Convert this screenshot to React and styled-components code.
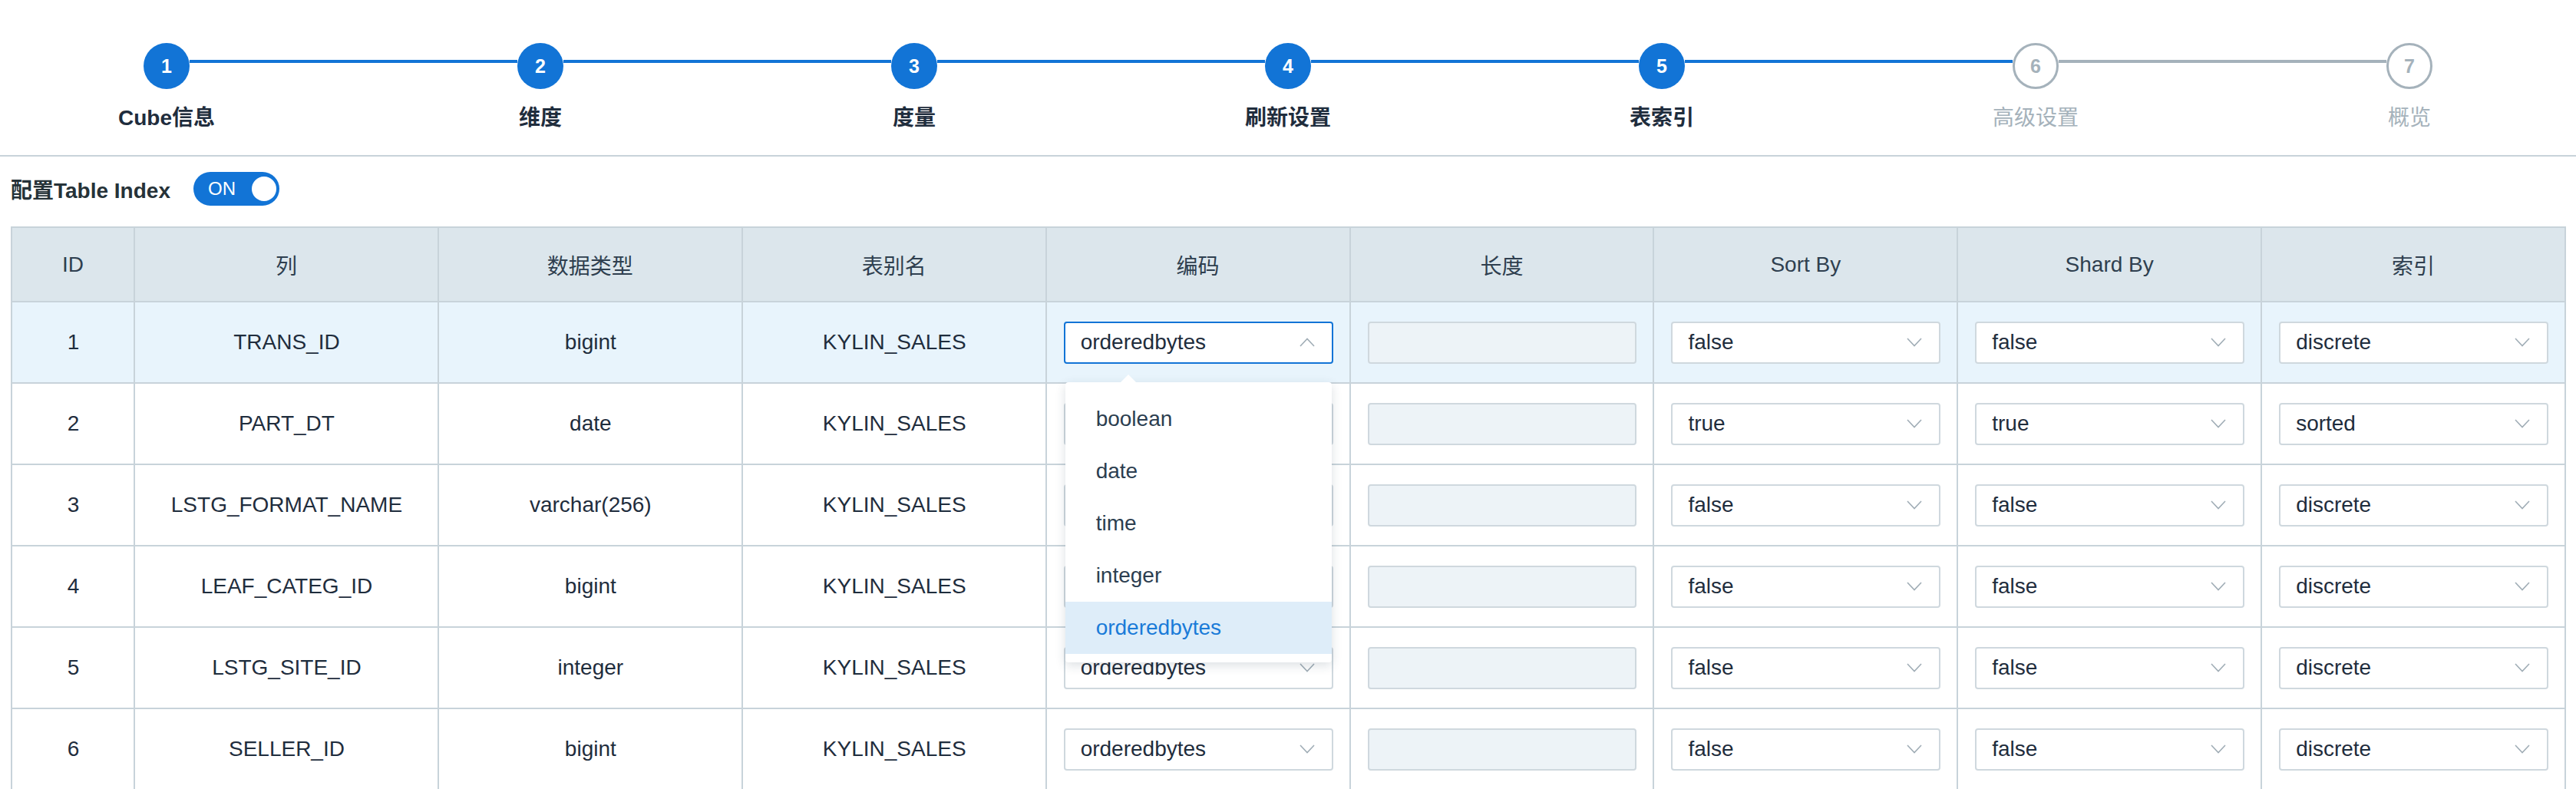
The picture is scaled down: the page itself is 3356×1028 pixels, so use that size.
import React from "react";
import styled, { createGlobalStyle, css } from "styled-components";

const GlobalStyle = createGlobalStyle`
  html, body {
    margin: 0;
    padding: 0;
    background: #fff;
  }
  body {
    font-family: "Liberation Sans", "Noto Sans CJK SC", sans-serif;
    color: #1f2d3d;
  }
  * {
    box-sizing: border-box;
  }
`;

const blue = "#1274d6";
const grey = "#a5b2bb";
const line = "#c8d3da";

const steps = ["Cube信息", "维度", "度量", "刷新设置", "表索引", "高级设置", "概览"];
const current = 5;

const rows = [
  { id: 1, col: "TRANS_ID", type: "bigint", enc: "orderedbytes", sort: "false", shard: "false", index: "discrete", open: true },
  { id: 2, col: "PART_DT", type: "date", enc: "date", sort: "true", shard: "true", index: "sorted" },
  { id: 3, col: "LSTG_FORMAT_NAME", type: "varchar(256)", enc: "dict", sort: "false", shard: "false", index: "discrete" },
  { id: 4, col: "LEAF_CATEG_ID", type: "bigint", enc: "orderedbytes", sort: "false", shard: "false", index: "discrete" },
  { id: 5, col: "LSTG_SITE_ID", type: "integer", enc: "orderedbytes", sort: "false", shard: "false", index: "discrete" },
  { id: 6, col: "SELLER_ID", type: "bigint", enc: "orderedbytes", sort: "false", shard: "false", index: "discrete" },
];

const encodings = ["boolean", "date", "time", "integer", "orderedbytes"];

const Steps = styled.div`
  display: flex;
  align-items: flex-start;
  height: 204px;
  padding: 56px 187px 0;
  border-bottom: 2px solid ${line};
`;

const Step = styled.div`
  flex: none;
  width: 60px;
  display: flex;
  flex-direction: column;
  align-items: center;
`;

const Circle = styled.div`
  width: 60px;
  height: 60px;
  border-radius: 50%;
  display: flex;
  align-items: center;
  justify-content: center;
  font-size: 25px;
  font-weight: 700;
  ${({ done }) =>
    done
      ? css`
          background: ${blue};
          color: #fff;
        `
      : css`
          background: #fff;
          color: ${grey};
          border: 3px solid ${grey};
        `}
`;

const StepLabel = styled.div`
  margin-top: 18px;
  white-space: nowrap;
  font-size: 28px;
  line-height: 40px;
  font-weight: ${({ done }) => (done ? 700 : 400)};
  color: ${({ done }) => (done ? "#1f2d3d" : grey)};
`;

const Connector = styled.div`
  flex: 1;
  height: 4px;
  margin-top: 22px;
  background: ${({ done }) => (done ? blue : grey)};
`;

const Toolbar = styled.div`
  display: flex;
  align-items: center;
  gap: 30px;
  padding: 20px 14px 0;
`;

const ToolbarLabel = styled.span`
  font-size: 28px;
  font-weight: 700;
  color: #263238;
`;

const Switch = styled.div`
  width: 112px;
  height: 44px;
  border-radius: 22px;
  background: ${blue};
  display: flex;
  align-items: center;
  justify-content: space-between;
  padding: 0 4px 0 19px;
  color: #fff;
  font-size: 24px;
`;

const Knob = styled.span`
  width: 32px;
  height: 32px;
  border-radius: 50%;
  background: #fff;
`;

const TableWrap = styled.div`
  padding: 27px 13px 0 14px;
`;

const Table = styled.table`
  width: 100%;
  table-layout: fixed;
  border-collapse: collapse;
  font-size: 28px;
`;

const Th = styled.th`
  height: 97px;
  border: 2px solid ${line};
  background: #dce6ec;
  color: #2f3f4f;
  font-weight: 400;
  text-align: center;
`;

const Tr = styled.tr`
  background: ${({ active }) => (active ? "#e8f4fc" : "#fff")};
`;

const Td = styled.td`
  height: 106px;
  border: 2px solid ${line};
  text-align: center;
  padding: 0 21px 0 22px;
  color: #1f2d3d;
`;

const SelectBox = styled.div`
  position: relative;
  height: 55px;
  display: flex;
  align-items: center;
  justify-content: space-between;
  padding: 0 22px 0 20px;
  background: #fff;
  border: 2px solid ${({ open }) => (open ? blue : "#cfd8de")};
  border-radius: 4px;
  text-align: left;
  font-size: 28px;
  color: #1f2d3d;
`;

const LengthInput = styled.div`
  height: 55px;
  background: #edf3f7;
  border: 2px solid #cfd8de;
  border-radius: 4px;
`;

const Menu = styled.ul`
  position: absolute;
  z-index: 5;
  left: 0;
  right: 0;
  top: calc(100% + 26px);
  margin: 0;
  padding: 14px 0 11px;
  list-style: none;
  background: #fff;
  border-radius: 4px;
  box-shadow: 0 4px 14px rgba(40, 60, 80, 0.16);

  &::before {
    content: "";
    position: absolute;
    top: -10px;
    left: 72px;
    border-left: 10px solid transparent;
    border-right: 10px solid transparent;
    border-bottom: 10px solid #fff;
  }
`;

const MenuItem = styled.li`
  height: 68px;
  display: flex;
  align-items: center;
  padding-left: 40px;
  font-size: 28px;
  color: ${({ selected }) => (selected ? "#1a7bd8" : "#2c3e50")};
  background: ${({ selected }) => (selected ? "#deedf9" : "transparent")};
`;

function Chevron({ up }) {
  return (
    <svg width="20" height="12" viewBox="0 0 20 12" fill="none">
      <polyline
        points={up ? "1,11 10,1.5 19,11" : "1,1 10,10.5 19,1"}
        stroke="#a0adb6"
        strokeWidth="1.6"
      />
    </svg>
  );
}

function Select({ value, open, children }) {
  return (
    <SelectBox open={open}>
      <span>{value}</span>
      <Chevron up={open} />
      {children}
    </SelectBox>
  );
}

export default function App() {
  return (
    <>
      <GlobalStyle />
      <Steps>
        {steps.map((s, i) => (
          <React.Fragment key={s}>
            {i > 0 && <Connector done={i < current + 1} />}
            <Step>
              <Circle done={i < current}>{i + 1}</Circle>
              <StepLabel done={i < current}>{s}</StepLabel>
            </Step>
          </React.Fragment>
        ))}
      </Steps>
      <Toolbar>
        <ToolbarLabel>配置Table Index</ToolbarLabel>
        <Switch>
          ON
          <Knob />
        </Switch>
      </Toolbar>
      <TableWrap>
        <Table>
          <colgroup>
            <col style={{ width: 160 }} />
            <col />
            <col />
            <col />
            <col />
            <col />
            <col />
            <col />
            <col />
          </colgroup>
          <thead>
            <tr>
              {["ID", "列", "数据类型", "表别名", "编码", "长度", "Sort By", "Shard By", "索引"].map((h) => (
                <Th key={h}>{h}</Th>
              ))}
            </tr>
          </thead>
          <tbody>
            {rows.map((r) => (
              <Tr key={r.id} active={r.open}>
                <Td>{r.id}</Td>
                <Td>{r.col}</Td>
                <Td>{r.type}</Td>
                <Td>KYLIN_SALES</Td>
                <Td>
                  <Select value={r.enc} open={r.open}>
                    {r.open && (
                      <Menu>
                        {encodings.map((e) => (
                          <MenuItem key={e} selected={e === r.enc}>
                            {e}
                          </MenuItem>
                        ))}
                      </Menu>
                    )}
                  </Select>
                </Td>
                <Td>
                  <LengthInput />
                </Td>
                <Td>
                  <Select value={r.sort} />
                </Td>
                <Td>
                  <Select value={r.shard} />
                </Td>
                <Td>
                  <Select value={r.index} />
                </Td>
              </Tr>
            ))}
          </tbody>
        </Table>
      </TableWrap>
    </>
  );
}
